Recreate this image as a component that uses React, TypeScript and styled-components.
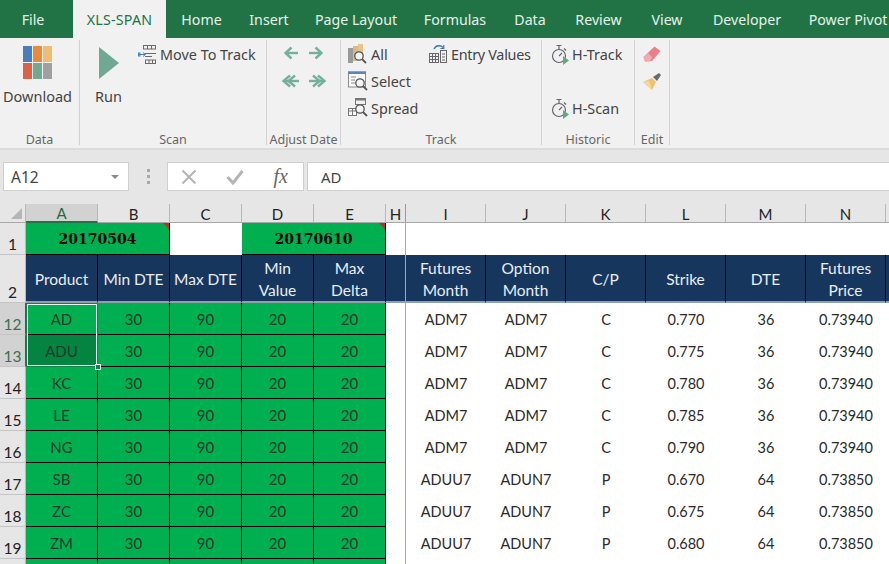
import React from "react";
import styled, { createGlobalStyle } from "styled-components";

const Global = createGlobalStyle`
  html, body { margin: 0; padding: 0; background: #fff; }
  #root { width: 889px; height: 564px; overflow: hidden; }
`;

const Page = styled.div`
  width: 889px; height: 564px; overflow: hidden;
  display: flex; flex-direction: column;
  font-family: "Noto Sans", "Open Sans", sans-serif;
`;

const TabBar = styled.div`
  flex: 0 0 38px; display: flex; background: #217346; white-space: nowrap; overflow: hidden;
`;
const Tab = styled.div<{ $w: number; $active?: boolean; $gap?: number }>`
  flex: 0 0 ${p => p.$w}px; margin-left: ${p => p.$gap ?? 0}px;
  display: flex; align-items: center; justify-content: center;
  font-size: 14.2px; letter-spacing: ${p => (p.$active ? "0.25px" : "0")};
  color: ${p => (p.$active ? "#217346" : "#e4f3e9")};
  background: ${p => (p.$active ? "#f1f1f1" : "transparent")};
`;

const Ribbon = styled.div`
  flex: 0 0 112px; box-sizing: border-box; display: flex; background: #f1f1f1;
  border-bottom: 2px solid #dcdcdc; padding-top: 2px; color: #444;
`;
const Group = styled.div<{ $w: number }>`
  flex: 0 0 ${p => p.$w}px; box-sizing: border-box; height: 105px;
  display: flex; flex-direction: column;
  border-right: 1px solid #d2d2d2;
`;
const GroupBody = styled.div<{ $pl?: number }>`
  flex: 1; display: flex; padding-left: ${p => p.$pl ?? 0}px; min-height: 0;
`;
const GroupLabel = styled.div`
  flex: 0 0 24px; margin-bottom: -7px; text-align: center; font-size: 12.5px; line-height: 24px; color: #666; white-space: nowrap;
`;
const BigButton = styled.div<{ $w: number }>`
  flex: 0 0 ${p => p.$w}px; display: flex; flex-direction: column; align-items: center;
  padding-top: 6px; font-size: 14.5px; color: #444;
`;
const BigLabel = styled.span`
  margin-top: 6px; line-height: 20px; white-space: nowrap;
`;
const Stack = styled.div<{ $w?: number }>`
  ${p => (p.$w ? `flex: 0 0 ${p.$w}px;` : "")} display: flex; flex-direction: column; padding-top: 1px;
`;
const SmallItem = styled.div<{ $tight?: boolean }>`
  height: 27px; display: flex; align-items: center; gap: 3px; font-size: 14.4px; color: #444; white-space: nowrap;
  ${p => (p.$tight ? "letter-spacing: -0.3px;" : "")}
`;
const IconSlot = styled.span<{ $w?: number }>`
  flex: 0 0 ${p => p.$w ?? 20}px; height: 22px; display: flex; align-items: center; justify-content: center;
`;
const ArrowStack = styled.div`
  flex: 0 0 73px; margin-top: -1px; display: flex; flex-direction: column;
`;
const ArrowRow = styled.div<{ $gap: number }>`
  height: 28px; display: flex; align-items: center; justify-content: center; gap: ${p => p.$gap}px;
`;

const FormulaBar = styled.div`
  flex: 0 0 54px; box-sizing: border-box; display: flex; background: #e6e6e6; padding: 12px 0 0 3px; align-items: flex-start;
`;
const NameBox = styled.div`
  flex: 0 0 126px; box-sizing: border-box; height: 29px; background: #fff; border: 1px solid #cfcfcf;
  display: flex; align-items: center; justify-content: space-between; padding: 0 9px 0 7px;
  font-size: 15.5px; color: #444;
`;
const Caret = styled.span`
  width: 0; height: 0; border-left: 4px solid transparent; border-right: 4px solid transparent; border-top: 4px solid #8a8a8a;
`;
const Dots = styled.div`
  flex: 0 0 38px; height: 29px; display: flex; flex-direction: column; align-items: center; justify-content: center; gap: 3px;
`;
const Dot = styled.span`
  width: 3px; height: 3px; background: #a8a8a8;
`;
const FnBox = styled.div`
  flex: 0 0 137px; box-sizing: border-box; height: 29px; background: #fff; border: 1px solid #cfcfcf;
  display: flex; align-items: center; justify-content: space-between; padding: 0 15px 0 13px;
`;
const FxGlyph = styled.span`
  font-family: "Liberation Serif", serif; font-style: italic; font-size: 20px; color: #666; font-weight: normal;
`;
const FormulaInput = styled.div`
  flex: 1; margin-left: 3px; box-sizing: border-box; height: 29px; background: #fff; border: 1px solid #cfcfcf; border-right: none;
  display: flex; align-items: center; padding-left: 13px; font-size: 15px; color: #444;
`;

const Sheet = styled.div`
  flex: 1; min-height: 0; overflow: hidden; display: grid;
  font-family: Lato, Carlito, sans-serif;
  grid-template-columns: 26px repeat(5, 72px) 20px repeat(7, 80px);
  grid-template-rows: 19px 32px 48px repeat(9, 32px);
  background: #fff;
`;
const Cell = styled.div`
  box-sizing: border-box; display: flex; align-items: center; justify-content: center; text-align: center;
  min-width: 0; white-space: nowrap; overflow: hidden;
`;
const Corner = styled(Cell)`
  background: #e6e6e6; border-right: 1px solid #b8b8b8; border-bottom: 1px solid #a8a8a8; align-items: flex-end; justify-content: flex-end; padding: 0 3px 3px 0;
`;
const CornerMark = styled.span`
  width: 0; height: 0; border-left: 11px solid transparent; border-bottom: 11px solid #b5b5b5;
`;
const ColHead = styled(Cell)<{ $sel?: boolean; $freeze?: boolean }>`
  background: ${p => (p.$sel ? "#d2d2d2" : "#e6e6e6")};
  color: ${p => (p.$sel ? "#1f6b41" : "#222")};
  border-right: 1px solid ${p => (p.$freeze ? "#9a9a9a" : "#b8b8b8")};
  border-bottom: ${p => (p.$sel ? "2px solid #217346" : "1px solid #a8a8a8")};
  font-size: 15px; padding-top: 1px;
`;
const RowHead = styled(Cell)<{ $sel?: boolean }>`
  background: ${p => (p.$sel ? "#d2d2d2" : "#e6e6e6")};
  color: ${p => (p.$sel ? "#3a6f55" : "#222")};
  border-bottom: 1px solid #c4c4c4;
  border-right: 1px solid ${p => (p.$sel ? "#217346" : "#b8b8b8")};
  align-items: flex-end; font-size: 15.5px; line-height: 19px;
`;
const DateCell = styled(Cell)<{ $span: string }>`
  grid-column: ${p => p.$span}; position: relative; background: #00b050; color: #0a0a0a;
  border-bottom: 1px solid #000; border-right: 1px solid #000;
  font-family: "DejaVu Serif", serif; font-weight: bold; font-size: 14px;
`;
const RedMark = styled.span`
  position: absolute; top: 0; right: 0; width: 0; height: 0;
  border-top: 6px solid #d3202a; border-left: 6px solid transparent;
`;
const BlankCell = styled(Cell)<{ $freeze?: boolean; $span?: string }>`
  ${p => (p.$span ? `grid-column: ${p.$span};` : "")}
  background: #fff;
  ${p => (p.$freeze ? "border-right: 1px solid #a8a8a8;" : "")}
`;
const NavyCell = styled(Cell)<{ $freeze?: boolean }>`
  background: #17365d; color: #e8eef4; white-space: normal; font-size: 15.5px; line-height: 22px; padding-top: 1px;
  border-right: 1px solid ${p => (p.$freeze ? "#a8a8a8" : "#000")};
  border-bottom: 2px solid #8fa1a0;
`;
const GreenCell = styled(Cell)<{ $dark?: boolean; $anchor?: boolean }>`
  background: ${p => (p.$dark ? "#058340" : "#00b050")}; color: #143c28;
  border-right: 1px solid #000; border-bottom: 1px solid #000; font-size: 15px;
  ${p => (p.$anchor ? "position: relative; overflow: visible; z-index: 2;" : "")}
`;
const DataCell = styled(Cell)`
  background: #fff; color: #2a2a2a; font-size: 14.5px;
`;
const Selection = styled.div`
  position: absolute; left: 0; top: 0; width: 72px; height: 64px; box-sizing: border-box;
  border: 1px solid #1f7a4a; outline: 1px solid #e9f5ee; outline-offset: -2px; pointer-events: none;
`;
const Handle = styled.span`
  position: absolute; right: -4px; bottom: -4px; width: 4px; height: 4px; background: #1f7a4a; border: 1px solid #fff;
`;

const Download = () => (
  <svg width="30" height="34" viewBox="0 0 30 34">
    <rect x="0" y="0" width="9" height="16" fill="#4a7ebb" />
    <rect x="10" y="0" width="9" height="16" fill="#e88b3f" />
    <rect x="20" y="0" width="9" height="16" fill="#ecbd72" />
    <rect x="0" y="17" width="9" height="16" fill="#d9624a" />
    <rect x="10" y="17" width="9" height="16" fill="#74a892" />
    <rect x="20" y="17" width="9" height="16" fill="#a0a0a0" />
  </svg>
);
const Run = () => (
  <svg width="22" height="34" viewBox="0 0 22 34"><path d="M1 1 L21 17 L1 33 Z" fill="#6fa893" /></svg>
);
const MoveTrack = () => (
  <svg width="19" height="20" viewBox="0 0 19 20" fill="none" stroke="#6a6a6a" strokeWidth="1">
    <rect x="5.5" y="0.5" width="12" height="3.5" /><path d="M9.5 .5v3.5M13.5 .5v3.5" />
    <path d="M7 8.5h11M7 11.5h7" />
    <rect x="7.5" y="15" width="10" height="3.5" /><path d="M11 15v3.5M14.5 15v3.5" />
    <path d="M1 9.5h6M5 7.5l2.5 2-2.5 2" stroke="#4a7ebb" />
    <rect x="0.5" y="8" width="1.5" height="3" stroke="#4a7ebb" />
  </svg>
);
const Arrow = ({ flip, double }: { flip?: boolean; double?: boolean }) => (
  <svg width={double ? 20 : 15} height="14" viewBox={double ? "0 0 20 14" : "0 0 15 14"} style={flip ? { transform: "scaleX(-1)" } : undefined} fill="none" stroke="#74b09a" strokeWidth="2.4">
    {double ? (
      <>
        <path d="M2 7h15" /><path d="M11 1.5 L17.5 7 L11 12.5" /><path d="M6 1.5 L12.5 7 L6 12.5" />
      </>
    ) : (
      <>
        <path d="M1 7h12" /><path d="M7.5 1.5 L13.5 7 L7.5 12.5" />
      </>
    )}
  </svg>
);
const Lens = ({ x, y }: { x: number; y: number }) => (
  <g fill="none" stroke="#555" strokeWidth="1.3">
    <circle cx={x} cy={y} r="4.2" fill="#f4f4f4" /><path d={`M${x + 3} ${y + 3}l4 4`} strokeWidth="1.8" />
  </g>
);
const AllIcon = () => (
  <svg width="20" height="21" viewBox="0 0 20 21">
    <rect x="0" y="4" width="5" height="15" fill="#9a9a9a" />
    <rect x="5" y="2" width="5" height="15" fill="#d7b98a" />
    <rect x="10" y="0" width="5" height="9" fill="#e6c48d" />
    <Lens x={11} y={12} />
  </svg>
);
const SelectIcon = () => (
  <svg width="20" height="21" viewBox="0 0 20 21">
    <rect x="0.5" y="1" width="17" height="15" fill="#fafafa" stroke="#888" />
    <rect x="0" y="0.5" width="18" height="2.5" fill="#5b87b8" />
    <path d="M3 6h5M3 9h4M3 12h4" stroke="#888" />
    <Lens x={12} y={12} />
  </svg>
);
const SpreadIcon = () => (
  <svg width="20" height="21" viewBox="0 0 20 21">
    <rect x="7.5" y="0.5" width="10" height="6" fill="none" stroke="#777" /><rect x="7.5" y="0.5" width="10" height="2" fill="#777" />
    <rect x="0.5" y="10.5" width="8" height="7" fill="#fafafa" stroke="#777" /><path d="M0.5 13h8M4.5 11v7" stroke="#777" />
    <Lens x={12} y={11} />
  </svg>
);
const EntryIcon = () => (
  <svg width="19" height="21" viewBox="0 0 19 21" fill="none" stroke="#666">
    <path d="M5 5 C7 1 12 1 14 3.5" stroke="#3e76b0" strokeWidth="1.4" />
    <path d="M14.8 1v3.5h-3.3" stroke="#3e76b0" strokeWidth="1.2" />
    <rect x="0.5" y="9.5" width="9" height="9" /><path d="M0.5 12.5h9M0.5 15.5h9M3.5 9.5v9M6.5 9.5v9" />
    <rect x="11.5" y="6.5" width="6" height="12" /><path d="M13 10h3M13 13h3M13 16h3" />
  </svg>
);
const Watch = () => (
  <svg width="18" height="21" viewBox="0 0 18 21">
    <g fill="none" stroke="#666" strokeWidth="1.2">
      <circle cx="8" cy="12" r="6.5" /><path d="M5.5 1.5h5M8 2v3.5M8 12l3-3" />
      <path d="M13 4.5l2 2" />
    </g>
    <path d="M12 12 L18 16.5 L12 21 Z" fill="#62a78c" />
  </svg>
);
const Eraser = () => (
  <svg width="18" height="17" viewBox="0 0 18 17">
    <path d="M11.5 0.5 L17.5 5 L9 15 L2 15.5 L0.5 11 Z" fill="#ea7f88" />
    <path d="M0.5 11 L5 7 L9.5 11.5 L6.5 15.5 L2 15.5 Z" fill="#f2aab0" />
  </svg>
);
const Brush = () => (
  <svg width="18" height="18" viewBox="0 0 18 18">
    <path d="M10 4 L14 8 L18 2 L16 0 Z" fill="#6a6a6a" />
    <path d="M9 5 L13 9 L9 17 L0 9 Z" fill="#eec36f" />
    <path d="M0 9 L6 8 L9 17 Z" fill="#f3d79c" />
  </svg>
);
const XMark = () => (
  <svg width="16" height="16" viewBox="0 0 16 16" stroke="#b4b4b4" strokeWidth="2"><path d="M1.5 1.5l13 13M14.5 1.5l-13 13" /></svg>
);
const Check = () => (
  <svg width="18" height="16" viewBox="0 0 18 16" fill="none" stroke="#b4b4b4" strokeWidth="3"><path d="M1.5 8l5.5 6L16.5 2" /></svg>
);

const tabs: { t: string; w: number; active?: boolean; gap?: number }[] = [
  { t: "File", w: 66 }, { t: "XLS-SPAN", w: 93, active: true, gap: 7 }, { t: "Home", w: 71 }, { t: "Insert", w: 64 },
  { t: "Page Layout", w: 110 }, { t: "Formulas", w: 88 }, { t: "Data", w: 62 }, { t: "Review", w: 75 },
  { t: "View", w: 62 }, { t: "Developer", w: 98 }, { t: "Power Pivot", w: 104 },
];

const leftCols = ["A", "B", "C", "D", "E"];
const rightCols = ["I", "J", "K", "L", "M", "N"];
const products = ["AD", "ADU", "KC", "LE", "NG", "SB", "ZC", "ZM"];
const rightHeads = ["Futures Month", "Option Month", "C/P", "Strike", "DTE", "Futures Price", ""];
const rows = [
  ["ADM7", "ADM7", "C", "0.770", "36", "0.73940"],
  ["ADM7", "ADM7", "C", "0.775", "36", "0.73940"],
  ["ADM7", "ADM7", "C", "0.780", "36", "0.73940"],
  ["ADM7", "ADM7", "C", "0.785", "36", "0.73940"],
  ["ADM7", "ADM7", "C", "0.790", "36", "0.73940"],
  ["ADUU7", "ADUN7", "P", "0.670", "64", "0.73850"],
  ["ADUU7", "ADUN7", "P", "0.675", "64", "0.73850"],
  ["ADUU7", "ADUN7", "P", "0.680", "64", "0.73850"],
];

export default function App() {
  return (
    <Page>
      <Global />
      <TabBar>
        {tabs.map(t => (
          <Tab key={t.t} $w={t.w} $active={t.active} $gap={t.gap}>{t.t}</Tab>
        ))}
      </TabBar>
      <Ribbon>
        <Group $w={80}>
          <GroupBody>
            <BigButton $w={75}><Download /><BigLabel>Download</BigLabel></BigButton>
          </GroupBody>
          <GroupLabel>Data</GroupLabel>
        </Group>
        <Group $w={187}>
          <GroupBody>
            <BigButton $w={57}><Run /><BigLabel>Run</BigLabel></BigButton>
            <Stack><SmallItem><IconSlot $w={20}><MoveTrack /></IconSlot>Move To Track</SmallItem></Stack>
          </GroupBody>
          <GroupLabel>Scan</GroupLabel>
        </Group>
        <Group $w={74}>
          <GroupBody>
            <ArrowStack>
              <ArrowRow $gap={9}><Arrow flip /><Arrow /></ArrowRow>
              <ArrowRow $gap={6}><Arrow flip double /><Arrow double /></ArrowRow>
            </ArrowStack>
          </GroupBody>
          <GroupLabel>Adjust Date</GroupLabel>
        </Group>
        <Group $w={201}>
          <GroupBody $pl={7}>
            <Stack $w={80}>
              <SmallItem><IconSlot><AllIcon /></IconSlot>All</SmallItem>
              <SmallItem><IconSlot><SelectIcon /></IconSlot>Select</SmallItem>
              <SmallItem><IconSlot><SpreadIcon /></IconSlot>Spread</SmallItem>
            </Stack>
            <Stack>
              <SmallItem $tight><IconSlot><EntryIcon /></IconSlot>Entry Values</SmallItem>
            </Stack>
          </GroupBody>
          <GroupLabel>Track</GroupLabel>
        </Group>
        <Group $w={93}>
          <GroupBody $pl={9}>
            <Stack>
              <SmallItem><IconSlot $w={18}><Watch /></IconSlot>H-Track</SmallItem>
              <SmallItem />
              <SmallItem><IconSlot $w={18}><Watch /></IconSlot>H-Scan</SmallItem>
            </Stack>
          </GroupBody>
          <GroupLabel>Historic</GroupLabel>
        </Group>
        <Group $w={35}>
          <GroupBody $pl={8}>
            <Stack>
              <SmallItem><IconSlot $w={18}><Eraser /></IconSlot></SmallItem>
              <SmallItem><IconSlot $w={18}><Brush /></IconSlot></SmallItem>
            </Stack>
          </GroupBody>
          <GroupLabel>Edit</GroupLabel>
        </Group>
      </Ribbon>
      <FormulaBar>
        <NameBox>A12<Caret /></NameBox>
        <Dots><Dot /><Dot /><Dot /></Dots>
        <FnBox><XMark /><Check /><FxGlyph>fx</FxGlyph></FnBox>
        <FormulaInput>AD</FormulaInput>
      </FormulaBar>
      <Sheet>
        <Corner><CornerMark /></Corner>
        {leftCols.map(c => <ColHead key={c} $sel={c === "A"}>{c}</ColHead>)}
        <ColHead $freeze>H</ColHead>
        {rightCols.map(c => <ColHead key={c}>{c}</ColHead>)}
        <ColHead />

        <RowHead>1</RowHead>
        <DateCell $span="span 2">20170504<RedMark /></DateCell>
        <BlankCell />
        <DateCell $span="span 2">20170610<RedMark /></DateCell>
        <BlankCell $freeze />
        <BlankCell $span="span 7" />

        <RowHead>2</RowHead>
        <NavyCell>Product</NavyCell>
        <NavyCell>Min DTE</NavyCell>
        <NavyCell>Max DTE</NavyCell>
        <NavyCell>Min<br />Value</NavyCell>
        <NavyCell>Max<br />Delta</NavyCell>
        <NavyCell $freeze />
        {rightHeads.map((h, i) => (
          <NavyCell key={i}>{h.includes(" ") ? <>{h.split(" ")[0]}<br />{h.split(" ")[1]}</> : h}</NavyCell>
        ))}

        {products.map((p, i) => (
          <React.Fragment key={p}>
            <RowHead $sel={i < 2}>{12 + i}</RowHead>
            <GreenCell $dark={i === 1} $anchor={i === 0}>
              {p}
              {i === 0 && <Selection><Handle /></Selection>}
            </GreenCell>
            <GreenCell>30</GreenCell>
            <GreenCell>90</GreenCell>
            <GreenCell>20</GreenCell>
            <GreenCell>20</GreenCell>
            <BlankCell $freeze />
            {rows[i].map((v, j) => <DataCell key={j}>{v}</DataCell>)}
            <DataCell />
          </React.Fragment>
        ))}
        <RowHead />
        {leftCols.map(c => <GreenCell key={c} />)}
        <BlankCell $freeze />
        <BlankCell $span="span 7" />
      </Sheet>
    </Page>
  );
}
